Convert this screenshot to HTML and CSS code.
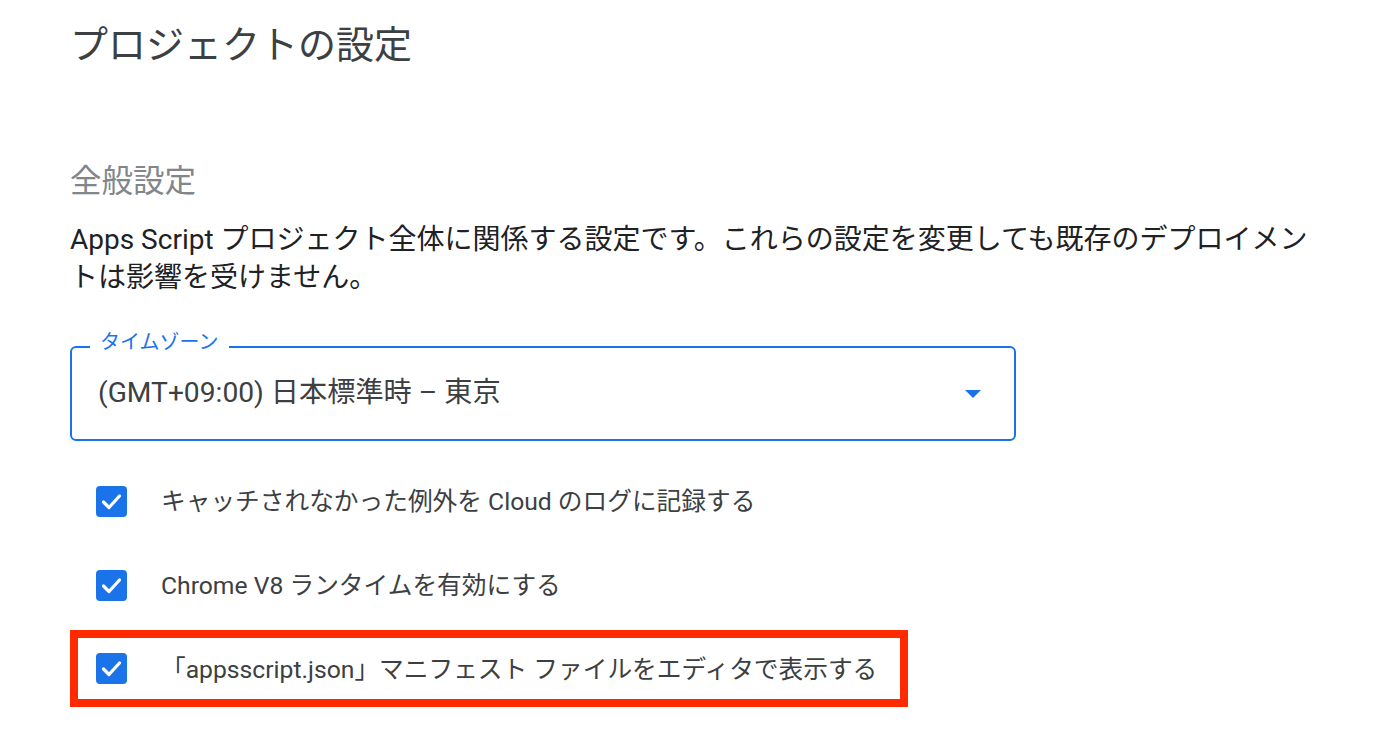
FILE: index.html
```html
<!DOCTYPE html>
<html lang="ja">
<head>
<meta charset="utf-8">
<title>プロジェクトの設定</title>
<link rel="stylesheet" href="styles.css">
</head>
<body>
<main class="page">
  <h1 class="title">プロジェクトの設定</h1>
  <h2 class="section-title">全般設定</h2>
  <p class="desc">Apps Script プロジェクト全体に関係する設定です。これらの設定を変更しても既存のデプロイメントは影響を受けません。</p>

  <div class="select">
    <span class="select-label">タイムゾーン</span>
    <span class="select-value">(GMT+09:00) 日本標準時 – 東京</span>
    <span class="select-arrow"></span>
  </div>

  <div class="row">
    <span class="checkbox"><svg viewBox="0 0 31 31" width="31" height="31"><polyline points="7.5,16 13,21.5 23.5,10" fill="none" stroke="#fff" stroke-width="3.2" stroke-linecap="round" stroke-linejoin="round"/></svg></span>
    <span class="row-text">キャッチされなかった例外を Cloud のログに記録する</span>
  </div>
  <div class="row">
    <span class="checkbox"><svg viewBox="0 0 31 31" width="31" height="31"><polyline points="7.5,16 13,21.5 23.5,10" fill="none" stroke="#fff" stroke-width="3.2" stroke-linecap="round" stroke-linejoin="round"/></svg></span>
    <span class="row-text">Chrome V8 ランタイムを有効にする</span>
  </div>
  <div class="row row-highlight">
    <span class="checkbox"><svg viewBox="0 0 31 31" width="31" height="31"><polyline points="7.5,16 13,21.5 23.5,10" fill="none" stroke="#fff" stroke-width="3.2" stroke-linecap="round" stroke-linejoin="round"/></svg></span>
    <span class="row-text">「appsscript.json」マニフェスト ファイルをエディタで表示する</span>
  </div>
</main>
</body>
</html>
```

FILE: styles.css
```css
* { box-sizing: border-box; }
html, body { margin: 0; padding: 0; background: #fff; }
body {
  font-family: Roboto, "Noto Sans CJK JP", sans-serif;
  color: #202124;
}
.page {
  padding: 20px 0 0 70px;
}
.title {
  margin: 0;
  font-size: 38px;
  line-height: 50px;
  font-weight: 400;
  color: #3c4043;
}
.section-title {
  margin: 92px 0 0 0;
  font-size: 31.5px;
  line-height: 40px;
  font-weight: 400;
  color: #80868b;
}
.desc {
  margin: 19px 0 0 0;
  max-width: 1257px;
  font-size: 28px;
  line-height: 38px;
  color: #202124;
}
.select {
  position: relative;
  margin-top: 49px;
  width: 946px;
  height: 95px;
  border: 2px solid #1a73e8;
  border-radius: 6px;
  display: flex;
  align-items: center;
  padding: 0 33px 2px 26px;
}
.select-label {
  position: absolute;
  left: 18px;
  top: -18px;
  padding: 0 10px;
  background: #fff;
  color: #1a73e8;
  font-size: 20px;
  line-height: 24px;
}
.select-value {
  flex: 1;
  font-size: 28.2px;
  line-height: 36px;
  color: #3c4043;
}
.select-arrow {
  width: 0;
  height: 0;
  border-left: 8px solid transparent;
  border-right: 8px solid transparent;
  border-top: 8px solid #1a73e8;
  margin-top: 3px;
}
.row {
  display: flex;
  align-items: center;
  height: 84px;
  padding-left: 26px;
}
.select + .row { margin-top: 18px; }
.checkbox {
  width: 31px;
  height: 31px;
  border-radius: 4px;
  background: #1a73e8;
  display: flex;
  flex: none;
  margin-right: 34px;
}
.checkbox svg { display: block; }
.row-text {
  font-size: 24.7px;
  line-height: 34px;
  padding-top: 2px;
  color: #3c4043;
}
.row-highlight {
  margin-top: 3px;
  width: 838px;
  height: 77px;
  border: 8px solid #ff2a00;
  padding-left: 18px;
}
```
